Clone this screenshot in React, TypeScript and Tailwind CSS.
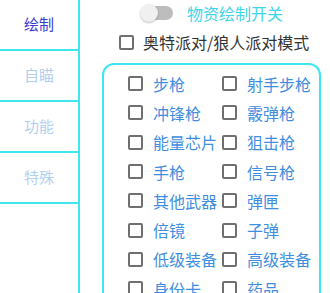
const tabs = ["绘制", "自瞄", "功能", "特殊"];

const items: [string, string][] = [
  ["步枪", "射手步枪"],
  ["冲锋枪", "霰弹枪"],
  ["能量芯片", "狙击枪"],
  ["手枪", "信号枪"],
  ["其他武器", "弹匣"],
  ["倍镜", "子弹"],
  ["低级装备", "高级装备"],
  ["身份卡", "药品"],
];

function Box() {
  return (
    <span className="inline-block h-[15px] w-[15px] shrink-0 rounded-[2px] border-2 border-[#6f6f6f] bg-white" />
  );
}

function Item({ label }: { label: string }) {
  return (
    <div className="flex items-center gap-[10px]">
      <Box />
      <span className="whitespace-nowrap text-[16px] leading-none text-[#3f8ee0]">{label}</span>
    </div>
  );
}

export default function App() {
  return (
    <div
      className="flex h-[293px] w-[330px] overflow-hidden bg-white"
      style={{ fontFamily: '"Noto Sans CJK SC", "Noto Sans", sans-serif' }}
    >
      <div className="flex w-[80px] shrink-0 flex-col border-r-2 border-[#3ee6ee]">
        {tabs.map((tab, i) => (
          <div
            key={tab}
            className={
              "flex h-[51px] shrink-0 items-center justify-center border-b-2 border-[#3ee6ee] text-[15px] " +
              (i === 0 ? "text-[#3b3bd0]" : "text-[#b3cff0]")
            }
          >
            {tab}
          </div>
        ))}
      </div>

      <div className="flex min-h-0 flex-1 flex-col">
        <div className="flex h-[25px] shrink-0 items-center pl-[63px]">
          <div className="relative h-[14px] w-[30px] rounded-full bg-[#bdbdbd]">
            <span className="absolute left-[-3px] top-[-2px] h-[18px] w-[18px] rounded-full bg-[#f0f0f0] shadow-[0_1px_2px_rgba(0,0,0,0.25)]" />
          </div>
          <span className="ml-[14px] text-[16px] leading-none text-[#40d6e8]">物资绘制开关</span>
        </div>

        <div className="flex h-[34px] shrink-0 items-center gap-[9px] pl-[39px]">
          <Box />
          <span className="whitespace-nowrap text-[16px] leading-none text-[#333333]">奥特派对/狼人派对模式</span>
        </div>

        <div className="ml-[22px] mr-[9px] mt-[4px] shrink-0 rounded-t-[12px] border-2 border-b-0 border-[#3ee6ee] pl-[24px] pt-[4px]">
          {items.map(([a, b]) => (
            <div key={a} className="flex h-[29.3px] items-center">
              <div className="w-[94px]">
                <Item label={a} />
              </div>
              <Item label={b} />
            </div>
          ))}
        </div>
      </div>
    </div>
  );
}
